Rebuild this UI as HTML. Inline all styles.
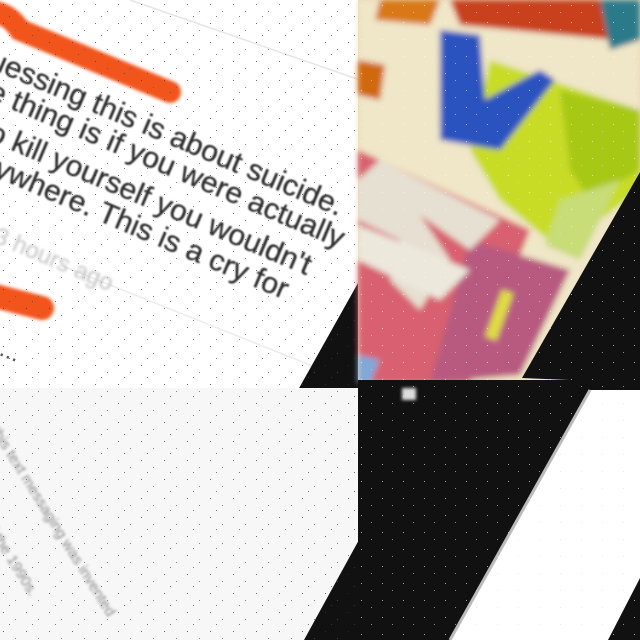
<!DOCTYPE html>
<html><head><meta charset="utf-8"><style>
html,body{margin:0;padding:0;background:#fff}
#w{position:relative;width:640px;height:640px;overflow:hidden;background:#fff;font-family:"Liberation Sans",sans-serif}
.ln{position:absolute;width:600px;text-align:right;white-space:nowrap;font-size:30px;line-height:30px;color:#2e2e2e;transform-origin:right center;transform:rotate(23deg);filter:blur(0.7px);-webkit-text-stroke:0.3px #2e2e2e}
.bl{position:absolute;white-space:nowrap;font-size:15px;color:#888;transform-origin:left center;transform:rotate(58deg);filter:blur(1.3px)}
</style></head><body><div id="w">
<svg width="640" height="640" style="position:absolute;left:0;top:0">
<defs><filter id="b"><feGaussianBlur stdDeviation="3"/></filter><filter id="b2" filterUnits="userSpaceOnUse" x="-50" y="-50" width="500" height="500"><feGaussianBlur stdDeviation="1.5"/></filter>
<pattern id="n" width="23" height="19" patternUnits="userSpaceOnUse"><rect x="3" y="4" width="1" height="1" fill="#333"/><rect x="15" y="11" width="1" height="1" fill="#555"/><rect x="9" y="16" width="1" height="1" fill="#444"/></pattern>
<pattern id="nw" width="21" height="17" patternUnits="userSpaceOnUse"><rect x="4" y="5" width="1" height="1" fill="#fff"/><rect x="14" y="12" width="1" height="1" fill="#ddd"/></pattern>
</defs>
<line x1="130" y1="0" x2="360" y2="80" stroke="#e6e6e6" stroke-width="1.5"/>
<line x1="60" y1="265" x2="360" y2="385" stroke="#ececec" stroke-width="1.5"/>
<path d="M-5 12 Q10 15 20 30 L170 92" stroke="#f2551c" stroke-width="22" stroke-linecap="round" fill="none" filter="url(#b2)"/>
<path d="M-5 296 L42 308" stroke="#f2551c" stroke-width="24" stroke-linecap="round" fill="none" filter="url(#b2)"/>
<polygon points="358,283 358,390 298,390" fill="#111"/>
<g>
<rect x="358" y="0" width="282" height="383" fill="#e8d8b8"/>
<g filter="url(#b)">
<rect x="358" y="0" width="282" height="383" fill="#f0e6c8"/>
<polygon points="450,0 620,0 615,40 460,25" fill="#c8401c"/>
<polygon points="380,0 440,0 430,25 375,20" fill="#d87818"/>
<polygon points="358,60 385,65 380,100 358,95" fill="#d06810"/>
<polygon points="600,0 640,0 640,40 610,50" fill="#2a7a8a"/>
<polygon points="490,60 640,110 640,190 560,250 500,200 470,150" fill="#c8dc28"/>
<polygon points="560,90 640,110 640,170 590,200 570,170" fill="#a8c818"/>
<polygon points="560,200 620,180 580,260 545,245" fill="#c8dc78"/>
<polygon points="440,30 480,35 485,100 540,70 555,80 500,150 440,140" fill="#2a52c0"/>
<polygon points="358,150 530,230 470,383 358,383" fill="#d86070"/>
<polygon points="470,240 570,270 520,375 430,383" fill="#b85a80"/>
<polygon points="380,160 500,220 470,250 420,215 450,260 420,310 390,280 400,240 358,220 358,180" fill="#e6e0d2"/>
<polygon points="358,225 470,270 440,300 358,260" fill="#ece8dc"/>
<polygon points="358,355 380,360 370,383 358,383" fill="#80a8d8"/>
<rect x="495" y="290" width="12" height="50" fill="#e0dc40" transform="rotate(20 500 310)"/>
</g>
<polygon points="640,172 522,378 640,383" fill="#111"/>
</g>
<rect x="358" y="380" width="282" height="260" fill="#111"/>
<polygon points="590,390 640,390 640,578 608,640 450,640" fill="#fff"/>
<line x1="590" y1="390" x2="450" y2="640" stroke="#bbb" stroke-width="3"/>
<rect x="402" y="388" width="14" height="12" fill="#ddd" filter="url(#b2)"/>
<rect x="0" y="388" width="358" height="252" fill="#f7f7f8"/>
<polygon points="360,538 360,640 304,640" fill="#111"/>
<rect x="0" y="0" width="360" height="640" fill="url(#n)" opacity="0.7"/>
<rect x="358" y="0" width="282" height="640" fill="url(#nw)" opacity="0.6"/>
</svg>
<div class="ln" style="left:-258px;top:193px">I'm guessing this is about suicide.</div>
<div class="ln" style="left:-257px;top:225px">The thing is if you were actually</div>
<div class="ln" style="left:-290px;top:252px">to kill yourself you wouldn't</div>
<div class="ln" style="left:-313px;top:276px">anywhere. This is a cry for</div>
<div class="ln" style="left:-488px;top:270px;color:#c4c4c4;-webkit-text-stroke:0;font-size:24px;filter:blur(1.2px)">3 hours ago</div>
<div style="position:absolute;left:0;top:338px;font-size:24px;color:#555;transform:rotate(22deg)">...</div>
<div class="bl" style="left:-5px;top:420px">this text messaging was invented</div>
<div class="bl" style="left:-20px;top:500px">until the 1990s.</div>
</div></body></html>
